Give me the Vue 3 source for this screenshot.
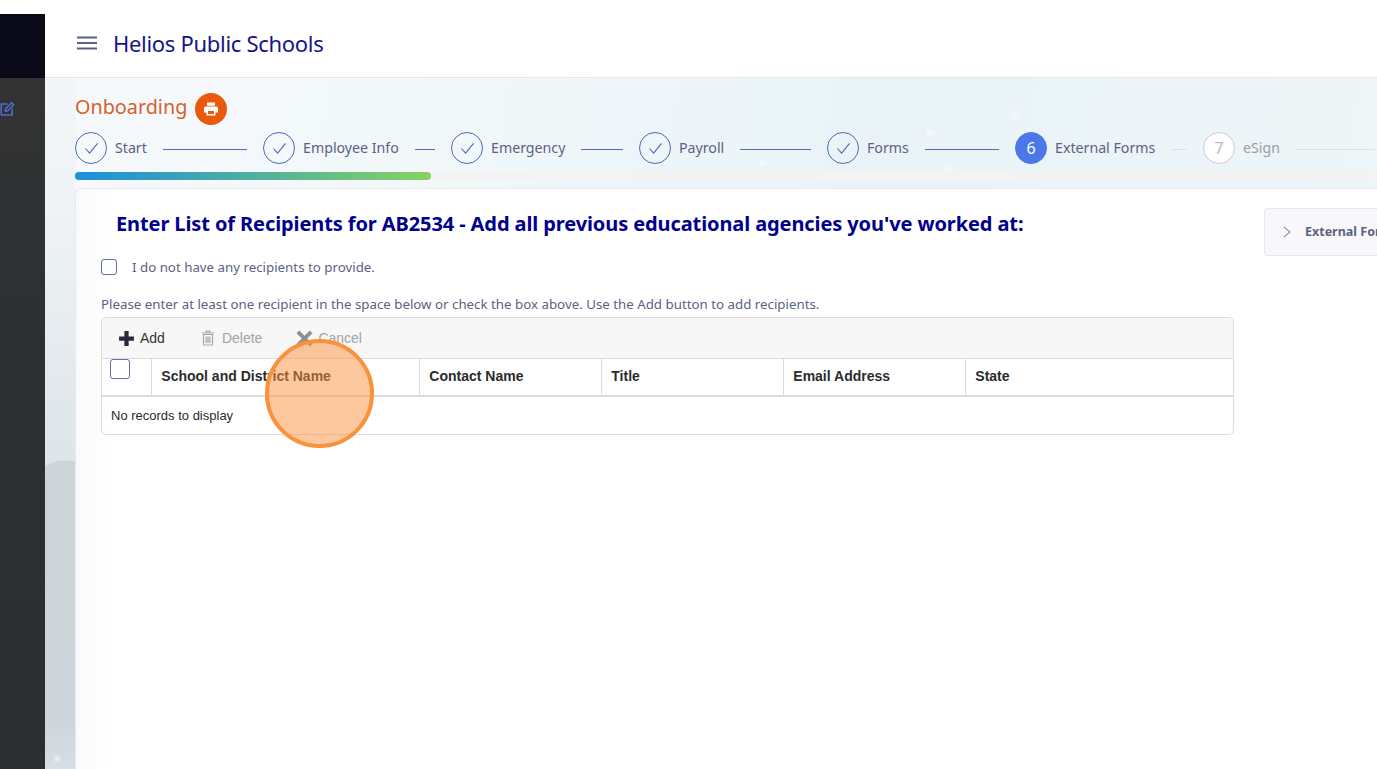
<script setup>
const steps = [
  { label: 'Start', state: 'done' },
  { label: 'Employee Info', state: 'done' },
  { label: 'Emergency', state: 'done' },
  { label: 'Payroll', state: 'done' },
  { label: 'Forms', state: 'done' },
  { label: 'External Forms', state: 'current', n: 6 },
  { label: 'eSign', state: 'todo', n: 7 }
]
const columns = ['School and District Name', 'Contact Name', 'Title', 'Email Address', 'State']
const sparkles = [
  { left: '963px', top: '30px', size: '14px' },
  { left: '879px', top: '49px', size: '12px' },
  { left: '898px', top: '86px', size: '12px' },
  { left: '712px', top: '80px', size: '10px' },
  { left: '1172px', top: '58px', size: '10px' },
  { left: '7px', top: '676px', size: '10px' }
]
</script>

<template>
  <div class="page">
    <aside class="side">
      <div class="side-top"></div>
      <div class="side-menu">
        <svg class="edit" viewBox="0 0 16 16" width="16" height="16" fill="none" stroke="#4f6fd0" stroke-width="1.5" stroke-linejoin="round" stroke-linecap="round">
          <path d="M8 3H2.2v11h11V8.2" />
          <path d="M6.2 10.2l.5-2.6L12.600 1.700l2.100 2.100-5.900 5.900z" />
        </svg>
      </div>
    </aside>
    <div class="main">
      <header class="topbar">
        <svg class="burger" viewBox="0 0 20 14" width="20" height="14" stroke="#5a5f85" stroke-width="2">
          <path d="M0 1.500h20M0 7h20M0 12.500h20" />
        </svg>
        <span class="school">Helios Public Schools</span>
      </header>
      <main class="content">
        <div class="hill"></div>
        <i v-for="(s, i) in sparkles" :key="i" class="sparkle" :style="{ left: s.left, top: s.top, width: s.size, height: s.size }"></i>
        <div class="heading">
          <h1>Onboarding</h1>
          <span class="print">
            <svg viewBox="0 0 16 16" width="16" height="16" fill="#fff">
              <path d="M4 1.500h8v3.200H4z" />
              <path fill-rule="evenodd" d="M2.700 5.500h10.600c.9 0 1.700.8 1.700 1.700v4.300h-2.500v3h-9v-3H1V7.200c0-.9.800-1.700 1.700-1.700zM5 10v3h6v-3z" />
            </svg>
          </span>
        </div>
        <ol class="stepper">
          <li v-for="s in steps" :key="s.label" class="step" :class="s.state">
            <span class="dot">
              <svg v-if="s.state === 'done'" viewBox="0 0 16 14" width="15" height="13" fill="none" stroke="#4a6db5" stroke-width="1.200">
                <path d="M1.500 7l4.500 5L14.500 1.500" />
              </svg>
              <template v-else>{{ s.n }}</template>
            </span>
            <span class="label">{{ s.label }}</span>
            <span class="line"></span>
          </li>
        </ol>
        <div class="progress"><div class="bar"></div></div>
        <section class="card">
          <div class="form">
            <h2>Enter List of Recipients for AB2534 - Add all previous educational agencies you've worked at:</h2>
            <label class="none">
              <span class="box"></span>
              <span>I do not have any recipients to provide.</span>
            </label>
            <p class="hint">Please enter at least one recipient in the space below or check the box above. Use the Add button to add recipients.</p>
            <div class="grid">
              <div class="toolbar">
                <span class="tool">
                  <svg viewBox="0 0 16 16" width="17" height="17" fill="#262b3a"><path d="M6 1h4v5h5v4h-5v5H6v-5H1V6h5z" /></svg>
                  Add
                </span>
                <span class="tool off trash-tool">
                  <svg viewBox="0 0 14 16" width="16" height="16" fill="none" stroke="#a8a8a8" stroke-width="1.200">
                    <path d="M2.500 4.500h9V15h-9zM1 3h12M5 3V1.200h4V3M5.200 6.500v6.500M7 6.500v6.500M8.800 6.500v6.500" />
                  </svg>
                  Delete
                </span>
                <span class="tool off cancel">
                  <svg viewBox="0 0 16 16" width="17" height="17" fill="#8f8f8f"><path d="M3 .5l5 5 5-5L15.500 3l-5 5 5 5-2.500 2.500-5-5-5 5L.5 13l5-5-5-5z" /></svg>
                  Cancel
                </span>
              </div>
              <div class="thead">
                <div class="th check"><span class="box big"></span></div>
                <div v-for="c in columns" :key="c" class="th">{{ c }}</div>
              </div>
              <div class="empty">No records to display</div>
            </div>
          </div>
          <aside class="panel">
            <svg viewBox="0 0 8 12" width="8" height="12" fill="none" stroke="#5a5f85" stroke-width="1"><path d="M1 1l6 5-6 5" /></svg>
            <b>External Forms</b>
          </aside>
        </section>
        <div class="spot"></div>
      </main>
    </div>
  </div>
</template>

<style>
html, body { margin: 0; overflow: hidden; background: #fff; }
</style>

<style scoped>
.page {
  display: flex;
  width: 1377px;
  height: 769px;
  padding-top: 14px;
  box-sizing: border-box;
  overflow: hidden;
  background: #fff;
  font-family: "Noto Sans", "Open Sans", sans-serif;
}
.side {
  flex: 0 0 45px;
  display: flex;
  flex-direction: column;
  background: linear-gradient(#343434, #2d2f31 50%, #2c2e31);
}
.side-top { height: 64px; background: #0a0a18; }
.side-menu { padding-top: 23px; margin-left: -1px; }
.edit { display: block; }
.main { flex: 1; min-width: 0; display: flex; flex-direction: column; }
.topbar {
  flex: none;
  display: flex;
  align-items: center;
  padding: 0 0 5px 32px;
  box-sizing: content-box;
  height: 58px;
  gap: 16px;
  background: #fff;
  border-bottom: 1px solid #e2e8ec;
}
.burger { flex: none; }
.school { font-size: 22px; letter-spacing: -.3px; color: #14148a; }
.content {
  position: relative;
  flex: 1;
  min-height: 0;
  padding: 14px 0 0 30px;
  overflow: hidden;
  background: linear-gradient(100deg, #f7f9fb 0%, #f2f8fa 25%, #e9f3f7 60%, #f0f6f8 100%);
}
.hill {
  position: absolute;
  left: 0;
  top: 0;
  bottom: 0;
  width: 31px;
  background:
    radial-gradient(ellipse 24px 14px at 20px 396px, #ced5d9 0 92%, transparent 100%),
    linear-gradient(#f3f6f8 0, #f0f4f6 110px, #e0e7eb 340px, #dde5e9 395px, #ced5d9 396px, #ced5da 640px, #d6dfe5 691px);
}
.sparkle {
  position: absolute;
  border-radius: 50%;
  background: radial-gradient(circle, rgba(255,255,255,.6) 0, rgba(255,255,255,0) 70%);
}
.heading {
  position: relative;
  display: flex;
  align-items: center;
  gap: 8px;
  height: 32px;
}
h1 {
  margin: -4px 0 0;
  font-size: 19.800px;
  font-weight: 400;
  color: #d4622e;
}
.print {
  position: relative;
  top: 1px;
  width: 32px;
  height: 32px;
  border-radius: 50%;
  background: #ea5a0c;
  display: flex;
  align-items: center;
  justify-content: center;
}
.stepper {
  position: relative;
  display: flex;
  list-style: none;
  margin: 8px 0 0;
  padding: 0;
  width: 1316px;
}
.step {
  flex: 0 0 188px;
  display: flex;
  align-items: center;
  height: 32px;
}
.dot {
  flex: none;
  width: 32px;
  height: 32px;
  box-sizing: border-box;
  border-radius: 50%;
  border: 1px solid #4a6db5;
  display: flex;
  align-items: center;
  justify-content: center;
  font-size: 16px;
}
.label {
  margin: -2px 0 0 8px;
  font-size: 14.200px;
  color: #5c6184;
  white-space: nowrap;
}
.line {
  flex: 1;
  height: 1px;
  margin: 2px 16px 0;
  background: #4a6db5;
}
.current .dot { background: #4a78e8; border-color: #4a78e8; color: #fff; }
.current .line { background: #dbe1e5; }
.todo .dot { background: #fff; border-color: #c9cdd1; color: #b9bdc1; }
.todo .label { color: #9a9da3; }
.todo .line { background: #dbe1e5; }
.progress {
  position: relative;
  height: 8px;
  margin-top: 8px;
  border-radius: 4px 0 0 4px;
  background: #f3f3f1;
}
.bar {
  width: 356px;
  height: 8px;
  border-radius: 4px;
  background: linear-gradient(90deg, #1b8fdc, #86d162);
}
.card {
  position: relative;
  display: flex;
  height: 600px;
  margin-top: 8px;
  border: 1px solid #e6e9ec;
  border-right: 0;
  border-radius: 6px 0 0 0;
  background: linear-gradient(90deg, #f9fafb, #fff 40px);
  box-sizing: border-box;
}
.form { width: 1158px; flex: none; padding-left: 25px; box-sizing: border-box; }
h2 {
  margin: 20px 0 0 15px;
  font-size: 20px;
  letter-spacing: -.1px;
  line-height: 30px;
  font-weight: 700;
  color: #00008f;
  white-space: nowrap;
}
.none {
  display: flex;
  align-items: center;
  gap: 15px;
  margin-top: 18px;
  height: 20px;
  font-size: 13.300px;
  color: #5c6184;
}
.box {
  display: block;
  width: 16px;
  height: 16px;
  box-sizing: border-box;
  border: 1px solid #5f6f9f;
  border-radius: 3px;
  background: #fff;
}
.box.big { width: 20px; height: 20px; }
.hint {
  margin: 18px 0 0;
  font-size: 13.300px;
  line-height: 18px;
  color: #5c6184;
  white-space: nowrap;
}
.grid {
  margin-top: 4px;
  width: 1133px;
  box-sizing: border-box;
  border: 1px solid #dcdcdc;
  border-radius: 5px;
  overflow: hidden;
  font-family: "Liberation Sans", Arial, sans-serif;
  font-size: 14px;
  color: #2b2b2b;
}
.toolbar {
  display: flex;
  align-items: center;
  height: 41px;
  padding-left: 16px;
  gap: 34px;
  background: #f7f7f7;
  border-bottom: 1px solid #dcdcdc;
  box-sizing: border-box;
}
.tool { display: flex; align-items: center; gap: 5px; color: #333; }
.tool.off { color: #a3a3a3; }
.trash-tool { gap: 6px; margin-left: 1px; }
.cancel { gap: 5px; }
.thead {
  display: grid;
  grid-template-columns: 50px 268px 182px 182px 182px 1fr;
  height: 38px;
  box-sizing: border-box;
  border-bottom: 2px solid #dcdcdc;
}
.th {
  display: flex;
  align-items: center;
  padding: 0 0 2px 9.300px;
  font-weight: 700;
  border-right: 1px solid #dcdcdc;
}
.th:last-child { border-right: 0; }
.th.check { padding: 0 0 0 8px; align-items: flex-start; }
.empty {
  height: 37px;
  display: flex;
  align-items: center;
  padding-left: 9px;
  font-size: 13px;
}
.panel {
  flex: none;
  width: 200px;
  height: 48px;
  margin-top: 19px;
  margin-left: 30px;
  display: flex;
  align-items: center;
  gap: 14px;
  padding-left: 18px;
  box-sizing: border-box;
  background: #f8f8fa;
  border: 1px solid #e8e9ec;
  border-radius: 3px;
  font-size: 12.500px;
  color: #5c6184;
}
.panel b { white-space: nowrap; font-weight: 700; position: relative; top: -1px; }
.spot {
  position: absolute;
  left: 220px;
  top: 261px;
  width: 109px;
  height: 109px;
  box-sizing: border-box;
  border-radius: 50%;
  border: 4px solid #f9923a;
  background: rgba(251, 146, 60, .5);
}
</style>
